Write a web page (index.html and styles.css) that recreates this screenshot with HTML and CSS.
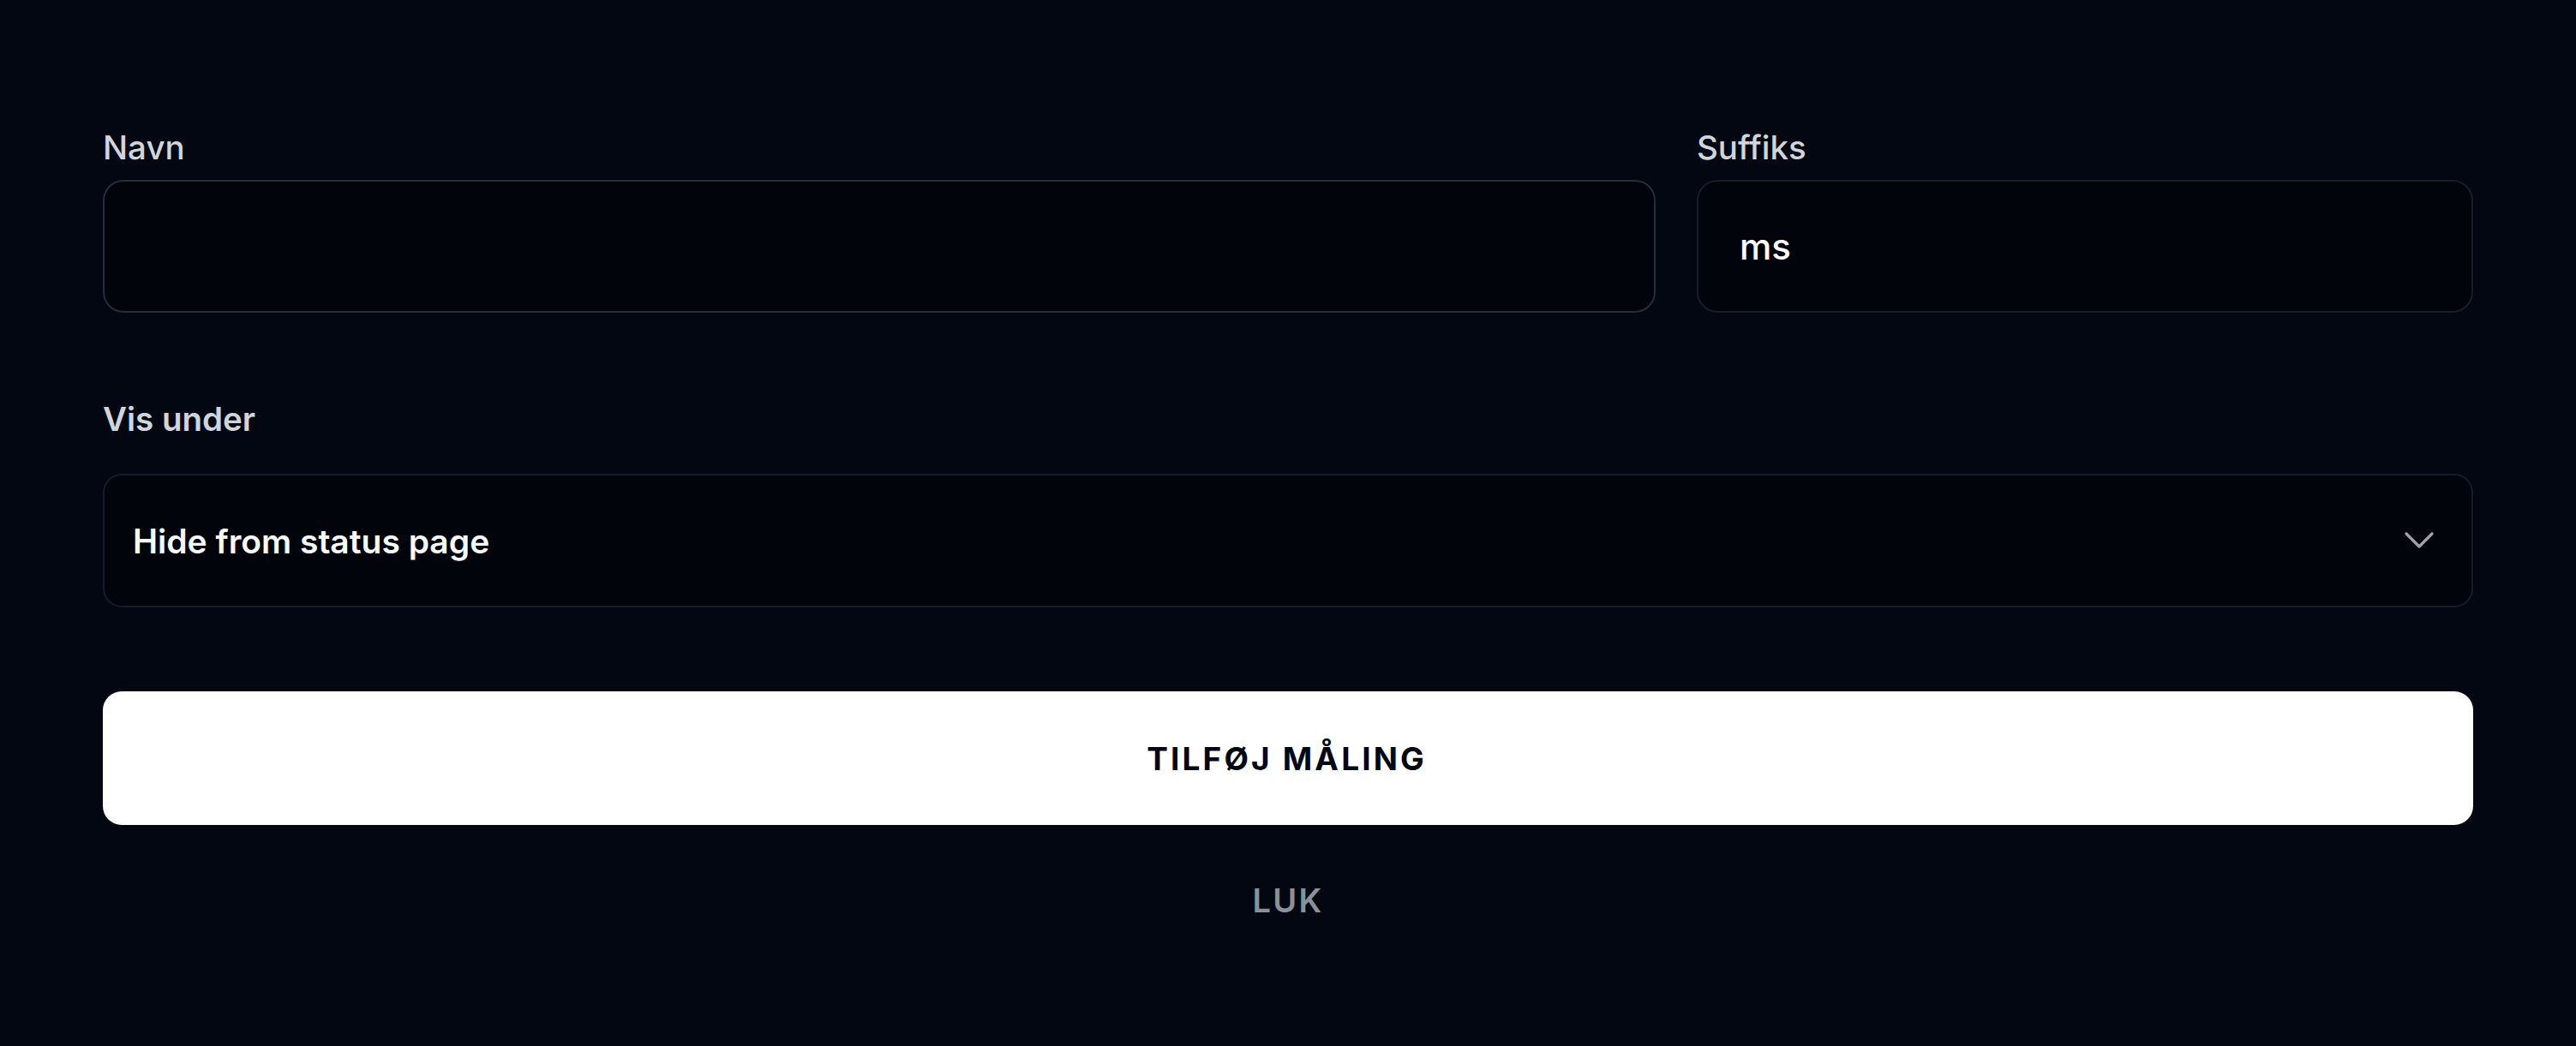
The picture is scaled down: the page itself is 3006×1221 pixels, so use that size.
FILE: index.html
```html
<!DOCTYPE html>
<html lang="da">
<head>
<meta charset="utf-8">
<title>Tilføj måling</title>
<link rel="stylesheet" href="styles.css">
</head>
<body>
<form class="form">
  <div class="row">
    <div class="field">
      <label class="label" for="navn">Navn</label>
      <input class="input input-focus" id="navn" type="text" value="">
    </div>
    <div class="field">
      <label class="label" for="suffiks">Suffiks</label>
      <input class="input" id="suffiks" type="text" value="ms">
    </div>
  </div>
  <div class="section">
    <div class="label label-strong">Vis under</div>
    <div class="select">
      <span class="select-text">Hide from status page</span>
      <svg class="chevron" width="34" height="20" viewBox="0 0 34 20" aria-hidden="true">
        <path d="M2 2 L17 17 L32 2" fill="none" stroke="#9ca3af" stroke-width="3.2" stroke-linecap="round" stroke-linejoin="round"/>
      </svg>
    </div>
  </div>
  <button class="primary" type="button">TILFØJ MÅLING</button>
  <div class="secondary">LUK</div>
</form>
</body>
</html>
```
FILE: styles.css
```css
html, body {
  margin: 0;
  padding: 0;
  background: #030712;
}
body {
  font-family: Inter, "Noto Sans", sans-serif;
  color: #f3f4f6;
}
.form {
  display: flex;
  flex-direction: column;
  padding: 144px 120px 0;
}
.row {
  display: grid;
  grid-template-columns: 2fr 1fr;
  gap: 48px;
}
.field {
  display: flex;
  flex-direction: column;
}
.label {
  display: block;
  font-size: 38.5px;
  line-height: 56px;
  font-weight: 500;
  color: #d1d5db;
  margin-bottom: 10px;
}
.label-strong {
  font-weight: 600;
  margin-bottom: 36px;
}
.input {
  box-sizing: border-box;
  width: 100%;
  height: 155px;
  margin: 0;
  border: 2px solid #181d29;
  border-radius: 24px;
  background: #02040c;
  color: #ffffff;
  font-family: Inter, "Noto Sans", sans-serif;
  font-size: 42px;
  font-weight: 500;
  padding: 0 48px;
  outline: none;
}
.input-focus {
  border-color: #262d39;
}
.section {
  margin-top: 96px;
  display: flex;
  flex-direction: column;
}
.select {
  box-sizing: border-box;
  height: 156px;
  border: 2px solid #171c28;
  border-radius: 22px;
  background: #02040c;
  display: flex;
  align-items: center;
  justify-content: space-between;
  padding: 0 44px 0 33px;
}
.select-text {
  font-size: 39px;
  font-weight: 600;
  color: #f9fafb;
  line-height: 1;
}
.chevron {
  display: block;
}
.primary {
  margin-top: 98px;
  height: 156px;
  border: none;
  border-radius: 22px;
  background: #ffffff;
  color: #030712;
  font-family: Inter, "Noto Sans", sans-serif;
  font-size: 37px;
  font-weight: 700;
  letter-spacing: 0.085em;
  padding-left: 0.085em;
  cursor: pointer;
}
.secondary {
  margin-top: 60px;
  text-align: center;
  font-size: 38px;
  line-height: 56px;
  font-weight: 600;
  letter-spacing: 0.06em;
  color: #8b9099;
}
```
